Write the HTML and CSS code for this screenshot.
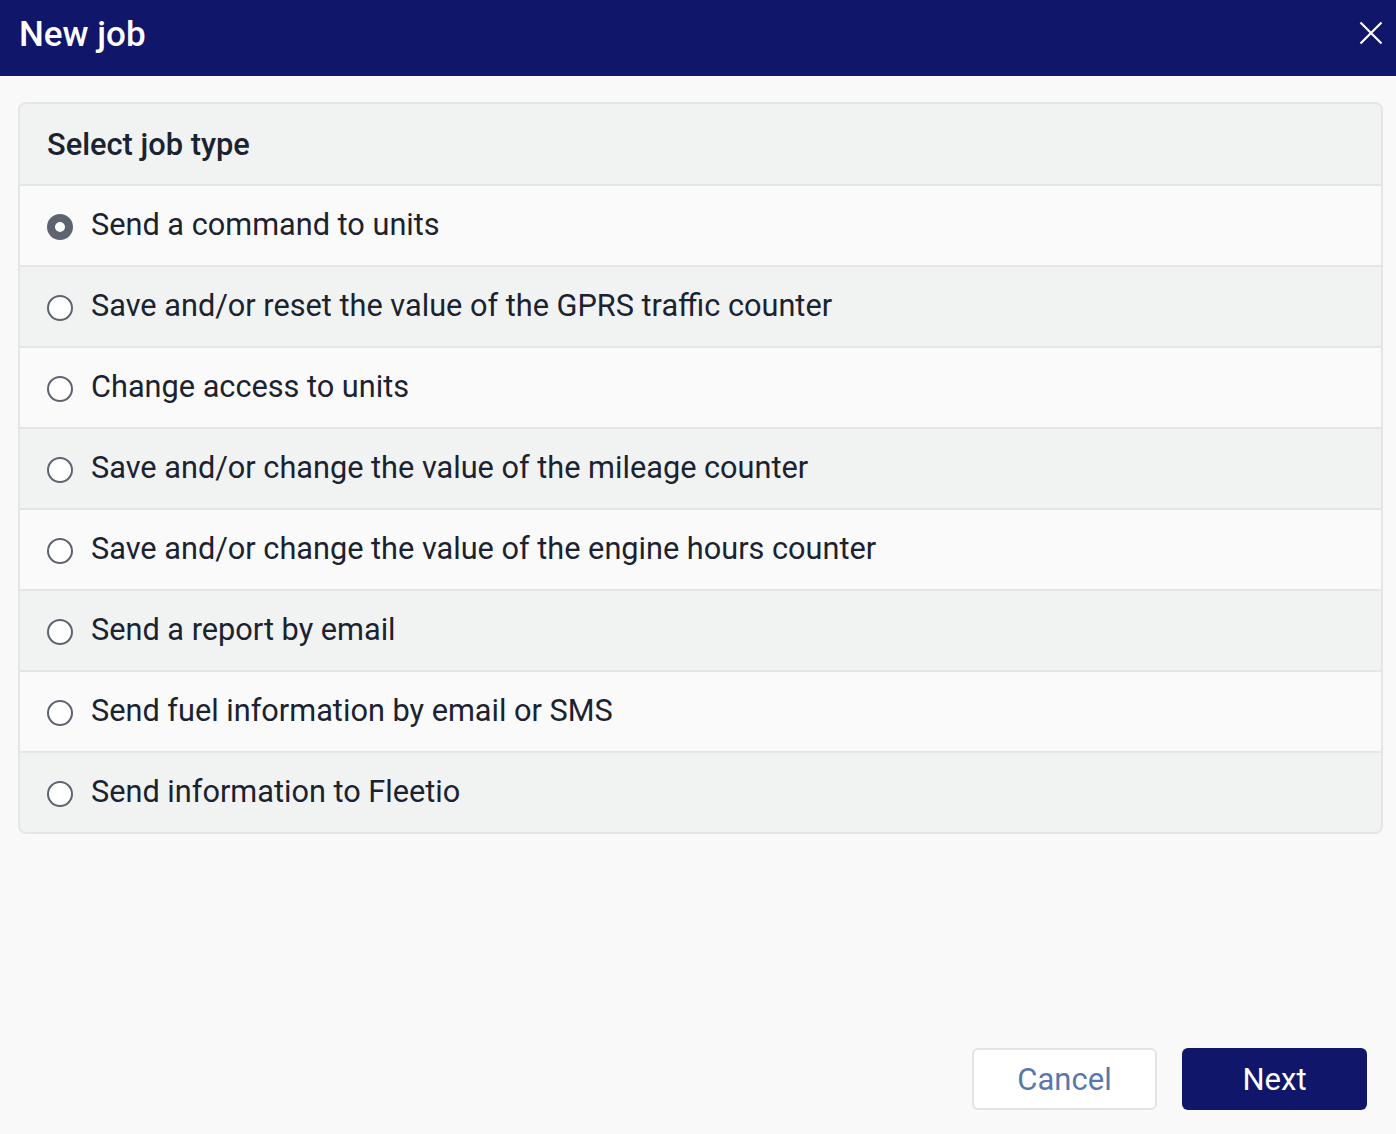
FILE: index.html
```html
<!DOCTYPE html>
<html>
<head>
<meta charset="utf-8">
<link rel="stylesheet" href="styles.css">
</head>
<body>
<div class="dialog">
  <header class="topbar">
    <h1 class="title">New job</h1>
    <button class="close" aria-label="Close">
      <svg width="24" height="24" viewBox="0 0 24 24"><path d="M1.5 1.5 L22.5 22.5 M22.5 1.5 L1.5 22.5" stroke="#fff" stroke-width="2.2" fill="none"/></svg>
    </button>
  </header>
  <main class="content">
    <div class="card">
      <div class="card-head">Select job type</div>
      <label class="row"><span class="radio checked"></span><span class="label">Send a command to units</span></label>
      <label class="row"><span class="radio"></span><span class="label">Save and/or reset the value of the GPRS traffic counter</span></label>
      <label class="row"><span class="radio"></span><span class="label">Change access to units</span></label>
      <label class="row"><span class="radio"></span><span class="label">Save and/or change the value of the mileage counter</span></label>
      <label class="row"><span class="radio"></span><span class="label">Save and/or change the value of the engine hours counter</span></label>
      <label class="row"><span class="radio"></span><span class="label">Send a report by email</span></label>
      <label class="row"><span class="radio"></span><span class="label">Send fuel information by email or SMS</span></label>
      <label class="row"><span class="radio"></span><span class="label">Send information to Fleetio</span></label>
    </div>
  </main>
  <footer class="actions">
    <button class="btn btn-cancel">Cancel</button>
    <button class="btn btn-next">Next</button>
  </footer>
</div>
</body>
</html>
```

FILE: styles.css
```css
html, body {
  margin: 0;
  padding: 0;
  background: #f9f9f9;
  font-family: Roboto, "Liberation Sans", sans-serif;
}
.dialog {
  width: 1396px;
  height: 1134px;
  display: flex;
  flex-direction: column;
  background: #f9f9f9;
}
.topbar {
  height: 76px;
  flex: none;
  background: #10166a;
  display: flex;
  align-items: center;
  justify-content: space-between;
  padding: 0 13px 0 19px;
  box-sizing: border-box;
}
.title {
  margin: 0;
  color: #fff;
  font-size: 35px;
  font-weight: 500;
  line-height: 1;
  margin-top: -7px;
}
.close {
  background: none;
  border: 0;
  padding: 0;
  width: 24px;
  height: 24px;
  margin-top: -10px;
  cursor: pointer;
}
.content {
  flex: 1;
  padding: 26px 13px 0 18px;
}
.card {
  border: 2px solid #e4e5e5;
  border-radius: 8px;
  overflow: hidden;
  background: #fafafa;
}
.card-head {
  height: 80px;
  background: #f1f2f2;
  display: flex;
  align-items: center;
  padding-left: 27px;
  font-size: 30.8px;
  font-weight: 500;
  color: #1b2230;
}
.row {
  height: 79px;
  border-top: 2px solid #e4e5e5;
  display: flex;
  align-items: center;
  padding-left: 27px;
  background: #fafafa;
}
.row:nth-of-type(even) { background: #f1f2f2; }
.card-head + .row { background: #fafafa; }
.radio {
  width: 22px;
  height: 22px;
  border: 2px solid #5e6370;
  border-radius: 50%;
  background: #fff;
  flex: none;
  margin-top: 2px;
  box-sizing: content-box;
}
.radio.checked {
  width: 10px;
  height: 10px;
  border: 8px solid #5e6370;
}
.label {
  margin-left: 18px;
  font-size: 30.7px;
  color: #1b2230;
  line-height: 1;
}
.actions {
  height: 86px;
  flex: none;
  display: flex;
  justify-content: flex-end;
  gap: 25px;
  padding-right: 29px;
  align-items: flex-start;
}
.btn {
  width: 185px;
  height: 62px;
  border-radius: 6px;
  font-family: Roboto, "Liberation Sans", sans-serif;
  font-size: 31px;
  cursor: pointer;
}
.btn-cancel {
  background: #fff;
  border: 2px solid #e3e3e3;
  color: #5a77ad;
}
.btn-next {
  background: #10166a;
  border: 0;
  color: #fff;
}
```
